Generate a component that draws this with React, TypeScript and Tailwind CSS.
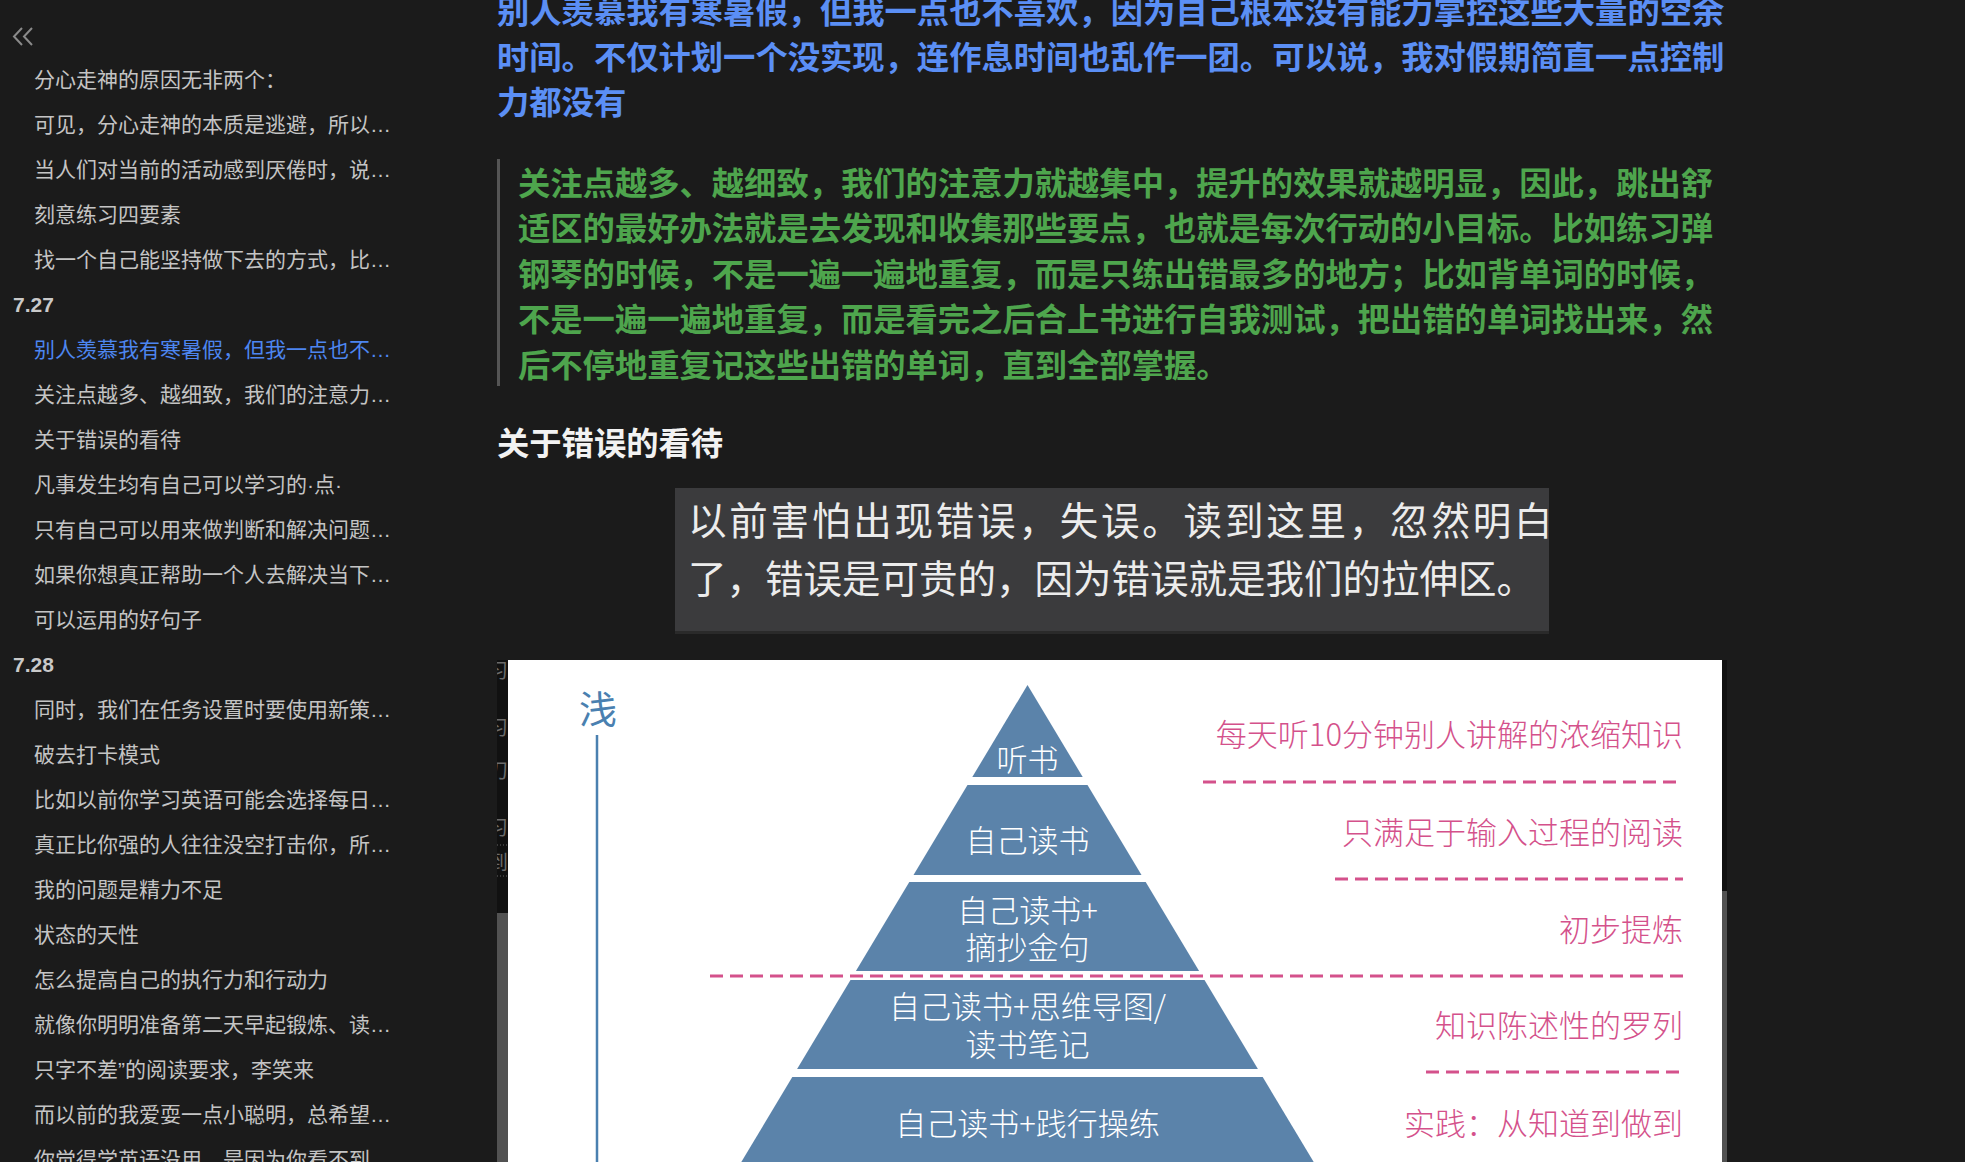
import React from 'react';

type TocItem = { text: string; kind?: 'date' | 'active' };

const toc: TocItem[] = [
  { text: '分心走神的原因无非两个：' },
  { text: '可见，分心走神的本质是逃避，所以我们要正视它' },
  { text: '当人们对当前的活动感到厌倦时，说明这件事太简单了' },
  { text: '刻意练习四要素' },
  { text: '找一个自己能坚持做下去的方式，比如每天读书' },
  { text: '7.27', kind: 'date' },
  { text: '别人羡慕我有寒暑假，但我一点也不喜欢', kind: 'active' },
  { text: '关注点越多、越细致，我们的注意力就越集中' },
  { text: '关于错误的看待' },
  { text: '凡事发生均有自己可以学习的·点·' },
  { text: '只有自己可以用来做判断和解决问题的知识才是有用的' },
  { text: '如果你想真正帮助一个人去解决当下的问题' },
  { text: '可以运用的好句子' },
  { text: '7.28', kind: 'date' },
  { text: '同时，我们在任务设置时要使用新策略和新方法' },
  { text: '破去打卡模式' },
  { text: '比如以前你学习英语可能会选择每日打卡' },
  { text: '真正比你强的人往往没空打击你，所以不必在意' },
  { text: '我的问题是精力不足' },
  { text: '状态的天性' },
  { text: '怎么提高自己的执行力和行动力' },
  { text: '就像你明明准备第二天早起锻炼、读书，结果却睡过头' },
  { text: '只字不差”的阅读要求，李笑来' },
  { text: '而以前的我爱耍一点小聪明，总希望走捷径' },
  { text: '你觉得学英语没用，是因为你看不到它的价值' },
];

function Sidebar() {
  return (
    <aside className="w-[400px] shrink-0 flex flex-col font-['Liberation_Sans','Noto_Sans_CJK_SC',sans-serif]">
      <div className="h-[57px] shrink-0 pl-[12px] pt-[27px]">
        <svg width="22" height="19" viewBox="0 0 22 19" fill="none" stroke="#8a8a8a" strokeWidth="2">
          <path d="M10 1 L2 9.5 L10 18" />
          <path d="M20 1 L12 9.5 L20 18" />
        </svg>
      </div>
      {toc.map((item, i) =>
        item.kind === 'date' ? (
          <div key={i} className="h-[45px] shrink-0 flex items-center pl-[13px] text-[21px] font-bold text-[#c9c9c9]">
            {item.text}
          </div>
        ) : (
          <div key={i} className="h-[45px] shrink-0 flex items-center pl-[34px]">
            <span
              className={
                'block w-[360px] truncate text-[21px] ' +
                (item.kind === 'active' ? 'text-[#4d86f0]' : 'text-[#c4c4c4]')
              }
            >
              {item.text}
            </span>
          </div>
        )
      )}
    </aside>
  );
}

function PyramidImage() {
  const cx = 530.5;
  const hw = (y: number) => 0.6 * (y - 25);
  const tier = (y1: number, y2: number) =>
    `${cx - hw(y1)},${y1} ${cx + hw(y1)},${y1} ${cx + hw(y2)},${y2} ${cx - hw(y2)},${y2}`;
  const pink = '#d4518b';
  const labels = [
    { y: 72, t: '每天听10分钟别人讲解的浓缩知识' },
    { y: 170, t: '只满足于输入过程的阅读' },
    { y: 267, t: '初步提炼' },
    { y: 363, t: '知识陈述性的罗列' },
    { y: 461, t: '实践：从知道到做到' },
  ];
  const dashes = [
    { y: 122, x1: 706 },
    { y: 219, x1: 838 },
    { y: 316, x1: 213 },
    { y: 412, x1: 929 },
  ];
  return (
    <svg width="1230" height="520" viewBox="0 0 1230 520" className="block">
      <rect x="0" y="0" width="11" height="253" fill="#111111" />
      <rect x="0" y="253" width="11" height="267" fill="#525252" />
      <rect x="1225" y="0" width="5" height="231" fill="#111111" />
      <rect x="1225" y="231" width="5" height="289" fill="#525252" />
      <g fill="#6a6a6a" fontSize="20">
        <text x="-9" y="18">习</text>
        <text x="-9" y="75">习</text>
        <text x="-9" y="118">刀</text>
        <text x="-9" y="175">习</text>
        <text x="-9" y="210">到</text>
      </g>
      <line x1="0" y1="185" x2="11" y2="185" stroke="#666" strokeDasharray="1 2" />
      <line x1="0" y1="216" x2="11" y2="216" stroke="#666" strokeDasharray="1 2" />
      <rect x="11" y="0" width="1214" height="520" fill="#ffffff" />

      <text x="101" y="46" fontSize="38" fill="#4a80b0" textAnchor="middle" dominantBaseline="central">
        浅
      </text>
      <line x1="100" y1="75" x2="100" y2="520" stroke="#4a80b0" strokeWidth="2.5" />

      <g fill="#5b83aa">
        <polygon points={tier(25, 117)} />
        <polygon points={tier(125, 215)} />
        <polygon points={tier(222, 311)} />
        <polygon points={tier(320, 409)} />
        <polygon points={tier(417, 520)} />
      </g>

      <g fill="#ffffff" fontSize="31" fontWeight="300" textAnchor="middle" dominantBaseline="central">
        <text x={cx} y="97">听书</text>
        <text x={cx} y="178">自己读书</text>
        <text x={cx} y="248">自己读书+</text>
        <text x={cx} y="285">摘抄金句</text>
        <text x={cx} y="344">自己读书+思维导图/</text>
        <text x={cx} y="382">读书笔记</text>
        <text x={cx} y="461">自己读书+践行操练</text>
      </g>

      <g stroke={pink} strokeWidth="3" strokeDasharray="13 7">
        {dashes.map((d, i) => (
          <line key={i} x1={d.x1} y1={d.y} x2="1186" y2={d.y} />
        ))}
      </g>

      <g fill={pink} fontSize="31" fontWeight="300" textAnchor="end" dominantBaseline="central">
        {labels.map((l, i) => (
          <text key={i} x="1186" y={l.y}>
            {l.t}
          </text>
        ))}
      </g>
    </svg>
  );
}

export default function App() {
  return (
    <div className="w-[1965px] h-[1162px] overflow-hidden flex bg-[#1b1b1b] font-['Noto_Sans_CJK_SC',sans-serif]">
      <Sidebar />
      <main className="flex-1 pl-[97px]">
        <div className="w-[1238px]">
          <p className="-mt-[13px] text-[32.3px] leading-[45.5px] font-bold text-[#5b8ff5]">
            别人羡慕我有寒暑假，但我一点也不喜欢，因为自己根本没有能力掌控这些大量的空余时间。不仅计划一个没实现，连作息时间也乱作一团。可以说，我对假期简直一点控制力都没有
          </p>
          <blockquote className="mt-[35px] border-l-[3px] border-[#555555] pl-[18px] text-[32.3px] leading-[45.5px] font-bold text-[#4ea54d]">
            关注点越多、越细致，我们的注意力就越集中，提升的效果就越明显，因此，跳出舒适区的最好办法就是去发现和收集那些要点，也就是每次行动的小目标。比如练习弹钢琴的时候，不是一遍一遍地重复，而是只练出错最多的地方；比如背单词的时候，不是一遍一遍地重复，而是看完之后合上书进行自我测试，把出错的单词找出来，然后不停地重复记这些出错的单词，直到全部掌握。
          </blockquote>
          <h3 className="mt-[33px] text-[32.3px] leading-[45.5px] font-bold text-[#f2f2f2]">关于错误的看待</h3>
          <div className="ml-[178px] mt-[23px] w-[874px] h-[143px] overflow-hidden bg-[#3b3b3d] pl-[13px] pt-[1px] text-[38.5px] leading-[58px] text-[#ececec] shadow-[0_3px_0_#2a2a2a]">
            <div className="whitespace-nowrap tracking-[2.8px]">以前害怕出现错误，失误。读到这里，忽然明白</div>
            <div className="whitespace-nowrap">了，错误是可贵的，因为错误就是我们的拉伸区。</div>
          </div>
          <div className="mt-[29px]">
            <PyramidImage />
          </div>
        </div>
      </main>
    </div>
  );
}
